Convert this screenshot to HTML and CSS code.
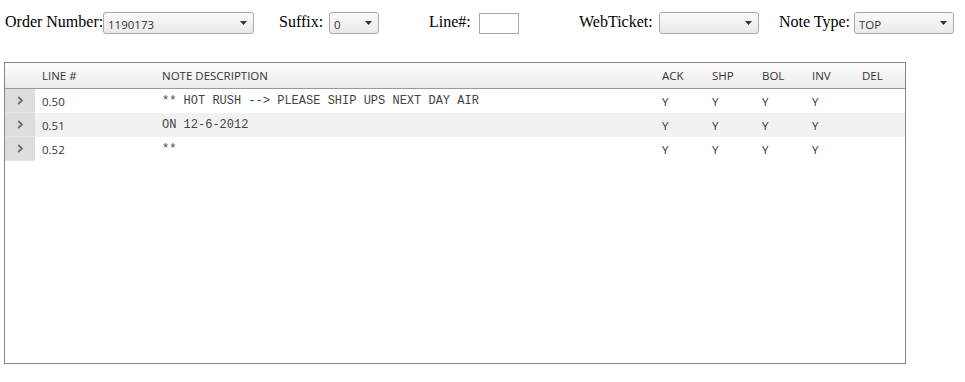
FILE: index.html
```html
<!DOCTYPE html>
<html>
<head>
<meta charset="utf-8">
<link rel="stylesheet" href="styles.css">
</head>
<body>
<div class="page">
  <div class="filters">
    <div class="group g-order">
      <label class="lbl-order">Order Number:</label>
      <div class="select w150"><span class="val">1190173</span><svg class="arrow" width="7" height="4" viewBox="0 0 7 4"><path d="M0 0H7L3.5 4Z" fill="#333"/></svg></div>
    </div>
    <div class="group g-suffix">
      <label class="lbl-suffix">Suffix:</label>
      <div class="select w50"><span class="val">0</span><svg class="arrow" width="7" height="4" viewBox="0 0 7 4"><path d="M0 0H7L3.5 4Z" fill="#333"/></svg></div>
    </div>
    <div class="group g-line">
      <label class="lbl-line">Line#:</label>
      <div class="textbox"></div>
    </div>
    <div class="group g-web">
      <label class="lbl-web">WebTicket:</label>
      <div class="select w100"><span class="val"></span><svg class="arrow" width="7" height="4" viewBox="0 0 7 4"><path d="M0 0H7L3.5 4Z" fill="#333"/></svg></div>
    </div>
    <div class="group g-note">
      <label class="lbl-note">Note Type:</label>
      <div class="select w100"><span class="val">TOP</span><svg class="arrow" width="7" height="4" viewBox="0 0 7 4"><path d="M0 0H7L3.5 4Z" fill="#333"/></svg></div>
    </div>
  </div>

  <div class="grid">
    <div class="row head">
      <div class="ind"></div>
      <div class="c c-line">LINE #</div>
      <div class="c c-desc">NOTE DESCRIPTION</div>
      <div class="c c-f">ACK</div>
      <div class="c c-f">SHP</div>
      <div class="c c-f">BOL</div>
      <div class="c c-f">INV</div>
      <div class="c c-f">DEL</div>
    </div>
    <div class="row">
      <div class="ind"><svg width="7" height="9" viewBox="0 0 7 9"><path d="M1.2 1L5 4.5L1.2 8" fill="none" stroke="#6a6a6a" stroke-width="1.7"/></svg></div>
      <div class="c c-line">0.50</div>
      <div class="c c-desc mono">** HOT RUSH --&gt; PLEASE SHIP UPS NEXT DAY AIR</div>
      <div class="c c-f">Y</div>
      <div class="c c-f">Y</div>
      <div class="c c-f">Y</div>
      <div class="c c-f">Y</div>
      <div class="c c-f"></div>
    </div>
    <div class="row alt">
      <div class="ind"><svg width="7" height="9" viewBox="0 0 7 9"><path d="M1.2 1L5 4.5L1.2 8" fill="none" stroke="#6a6a6a" stroke-width="1.7"/></svg></div>
      <div class="c c-line">0.51</div>
      <div class="c c-desc mono">ON 12-6-2012</div>
      <div class="c c-f">Y</div>
      <div class="c c-f">Y</div>
      <div class="c c-f">Y</div>
      <div class="c c-f">Y</div>
      <div class="c c-f"></div>
    </div>
    <div class="row">
      <div class="ind"><svg width="7" height="9" viewBox="0 0 7 9"><path d="M1.2 1L5 4.5L1.2 8" fill="none" stroke="#6a6a6a" stroke-width="1.7"/></svg></div>
      <div class="c c-line">0.52</div>
      <div class="c c-desc mono">**</div>
      <div class="c c-f">Y</div>
      <div class="c c-f">Y</div>
      <div class="c c-f">Y</div>
      <div class="c c-f">Y</div>
      <div class="c c-f"></div>
    </div>
  </div>
</div>
</body>
</html>
```
FILE: styles.css
```css
html, body {
  margin: 0;
  padding: 0;
  background: #fff;
}
.page {
  padding: 12px 0 0 4px;
}
.filters {
  display: flex;
  align-items: center;
  height: 22px;
  padding-left: 1px;
  font-family: "Liberation Serif", "Times New Roman", serif;
  font-size: 16px;
  color: #000;
}
.group {
  display: flex;
  align-items: center;
}
.g-order { width: 274px; }
.g-suffix { width: 150px; }
.g-line { width: 150px; }
.g-web { width: 200px; }
.group label {
  line-height: 18px;
  position: relative;
  top: -1px;
  white-space: nowrap;
}
.lbl-order { width: 98px; }
.lbl-suffix { width: 50px; }
.lbl-line { width: 50px; }
.lbl-web { width: 80px; }
.lbl-note { width: 75px; }
.select {
  box-sizing: border-box;
  height: 22px;
  border: 1px solid #a9a9a9;
  border-radius: 3px;
  background: linear-gradient(#fafafa, #e9e9e9);
  display: flex;
  align-items: center;
  justify-content: space-between;
  padding: 0 6px 0 4px;
  font-family: "Open Sans", "Noto Sans", sans-serif;
  font-size: 11.5px;
  color: #333;
}
.select .val {
  position: relative;
  top: 1px;
}
.w150 { width: 151px; }
.w50 { width: 50px; }
.w100 { width: 100px; }
.textbox {
  box-sizing: border-box;
  width: 40px;
  height: 21px;
  border: 1px solid #a9a9a9;
  background: #fff;
}

.grid {
  box-sizing: border-box;
  margin-top: 28px;
  width: 902px;
  height: 302px;
  border: 1px solid #868686;
  font-family: "Open Sans", "Noto Sans", sans-serif;
  font-size: 11.5px;
  color: #333;
}
.row {
  display: grid;
  grid-template-columns: 30px 120px 500px 50px 50px 50px 50px 50px;
  height: 24px;
  align-items: center;
}
.row.head {
  height: 25px;
  border-bottom: 1px solid #999;
  background: linear-gradient(#fcfcfc, #ebebeb);
  color: #333;
}
.row.alt {
  background: #f1f1f1;
}
.ind {
  height: 100%;
  background: #dddddd;
  display: flex;
  align-items: center;
  justify-content: center;
  border-bottom: 1px solid #e6e6e6;
  box-sizing: border-box;
}
.head .ind {
  background: transparent;
  border-bottom: 0;
}
.c {
  padding-left: 7px;
  white-space: nowrap;
}
.mono {
  font-family: "Liberation Mono", "Courier New", monospace;
  font-size: 12px;
  color: #444;
}
```
